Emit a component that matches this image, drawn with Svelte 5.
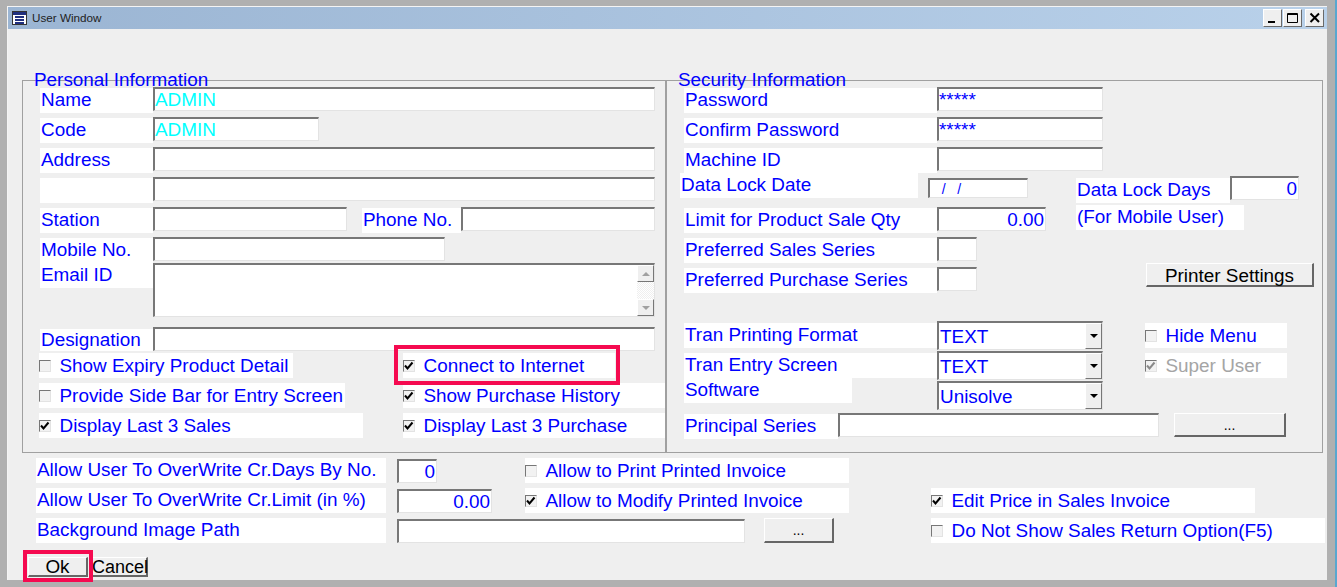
<script>
	// user window form, rows are 30px apart like the original dialog
	const leftChecks = [
		{ text: 'Show Expiry Product Detail', width: 254, on: false },
		{ text: 'Provide Side Bar for Entry Screen', width: 306, on: false },
		{ text: 'Display Last 3 Sales', width: 324, on: true }
	];
	const rightChecks = [
		{ text: 'Connect to Internet', width: 212, on: true, mark: true },
		{ text: 'Show Purchase History', width: 262, on: true },
		{ text: 'Display Last 3 Purchase', width: 262, on: true }
	];
	const selects = ['TEXT', 'TEXT', 'Unisolve'];
</script>

{#snippet check(item)}
	<div class="check" class:off={item.disabled} style="width:{item.width}px">
		<span class="box">
			{#if item.on}
				<svg width="10" height="10" viewBox="0 0 10 10"><path d="M1 4.5 L3.5 7.5 L8.5 1.5" fill="none" stroke="currentColor" stroke-width="2" /></svg>
			{/if}
		</span>
		<span>{item.text}</span>
	</div>
{/snippet}

<div class="screen">
	<div class="window">
		<div class="titlebar">
			<svg class="appicon" width="15" height="14" viewBox="0 0 15 14">
				<rect x="0.5" y="0.5" width="14" height="13" fill="#fff" stroke="#333" />
				<rect x="1" y="1" width="13" height="3" fill="#1f2f7f" />
				<rect x="3" y="5" width="9" height="2" fill="#1f2f7f" />
				<rect x="3" y="8" width="9" height="2" fill="#1f2f7f" />
				<rect x="3" y="11" width="9" height="2" fill="#1f2f7f" />
			</svg>
			<span class="title">User Window</span>
			<div class="winbtns">
				<div class="winbtn"><svg width="12" height="12" viewBox="0 0 12 12"><rect x="1" y="9" width="7" height="2" /></svg></div>
				<div class="winbtn"><svg width="12" height="12" viewBox="0 0 12 12"><path d="M0.5 1.5 H10.5 V10.5 H0.5 Z M0.5 2.5 H10.5" fill="none" stroke="#000" /></svg></div>
				<div class="winbtn close"><svg width="12" height="12" viewBox="0 0 12 12"><path d="M1.5 1.5 L10 10 M10 1.5 L1.5 10" fill="none" stroke="#000" stroke-width="2" /></svg></div>
			</div>
		</div>

		<div class="content">
			<div class="panels">
				<section class="panel personal">
					<h2>Personal Information</h2>
					<div class="row"><label class="lbl w112">Name</label><input class="cyan w502" value="ADMIN" readonly /></div>
					<div class="row"><label class="lbl w112">Code</label><input class="cyan w166" value="ADMIN" readonly /></div>
					<div class="row"><label class="lbl w112">Address</label><input class="w502" readonly /></div>
					<div class="row"><label class="lbl w112"></label><input class="w502" readonly /></div>
					<div class="row">
						<label class="lbl w112">Station</label><input class="w194" readonly />
						<label class="lbl phone">Phone No.</label><input class="w194" readonly />
					</div>
					<div class="row"><label class="lbl w112">Mobile No.</label><input class="w292" readonly /></div>
					<div class="row email">
						<label class="lbl w112 flush">Email ID</label>
						<div class="memo">
							<div class="scroll">
								<div class="sbtn"><span class="up"></span></div>
								<div class="track"></div>
								<div class="sbtn"><span class="down"></span></div>
							</div>
						</div>
					</div>
					<div class="row desig"><label class="lbl w112 low">Designation</label><input class="w502" readonly /></div>
					<div class="checks">
						<div>
							{#each leftChecks as item}
								<div class="row">{@render check(item)}</div>
							{/each}
						</div>
						<div class="col-right">
							{#each rightChecks as item}
								<div class="row">{@render check(item)}</div>
							{/each}
						</div>
					</div>
					<div class="mark connect"></div>
				</section>

				<section class="panel security">
					<h2>Security Information</h2>
					<div class="row"><label class="lbl w252">Password</label><input class="w166" value="*****" readonly /></div>
					<div class="row"><label class="lbl w252">Confirm Password</label><input class="w166" value="*****" readonly /></div>
					<div class="row"><label class="lbl w252">Machine ID</label><input class="w166" readonly /></div>
					<div class="row lockrow">
						<label class="lbl lockdate">Data Lock Date</label>
						<input class="datein" value="   /   /" readonly />
						<label class="lbl lockdays">Data Lock Days</label>
						<input class="right days" value="0" readonly />
					</div>
					<div class="row">
						<label class="lbl w252">Limit for Product Sale Qty</label>
						<input class="right w109" value="0.00" readonly />
						<label class="lbl mobile">(For Mobile User)</label>
					</div>
					<div class="row"><label class="lbl w252">Preferred Sales Series</label><input class="w40" readonly /></div>
					<div class="row">
						<label class="lbl w252">Preferred Purchase Series</label><input class="w40" readonly />
						<button class="btn printer">Printer Settings</button>
					</div>
					<div class="tran">
						<div class="tran-labels">
							<label class="lbl w252">Tran Printing Format</label>
							<label class="lbl w252 gap5">Tran Entry Screen</label>
							<label class="lbl soft">Software</label>
						</div>
						<div class="selects">
							{#each selects as s}
								<div class="select">
									<span class="val">{s}</span>
									<span class="drop"><span class="down dark"></span></span>
								</div>
							{/each}
						</div>
						<div class="tran-checks">
							<div class="row">{@render check({ text: 'Hide Menu', width: 142, on: false })}</div>
							<div class="row">{@render check({ text: 'Super User', width: 142, on: true, disabled: true })}</div>
						</div>
					</div>
					<div class="row">
						<label class="lbl w154">Principal Series</label>
						<input class="w321" readonly />
						<button class="btn dots">...</button>
					</div>
				</section>
			</div>

			<div class="lower">
				<div class="row">
					<label class="lbl w350">Allow User To OverWrite Cr.Days By No.</label>
					<input class="right w40 ml11" value="0" readonly />
					<div class="ml88">{@render check({ text: 'Allow to Print Printed Invoice', width: 324, on: false })}</div>
				</div>
				<div class="row">
					<label class="lbl w350">Allow User To OverWrite Cr.Limit (in %)</label>
					<input class="right w95 ml11" value="0.00" readonly />
					<div class="ml33">{@render check({ text: 'Allow to Modify Printed Invoice', width: 324, on: true })}</div>
					<div class="ml82">{@render check({ text: 'Edit Price in Sales Invoice', width: 324, on: true })}</div>
				</div>
				<div class="row">
					<label class="lbl w350">Background Image Path</label>
					<input class="w348 ml11" readonly />
					<button class="btn browse">...</button>
					<div class="ml97">{@render check({ text: 'Do Not Show Sales Return Option(F5)', width: 394, on: false })}</div>
				</div>
			</div>

			<div class="actions">
				<button class="btn ok">Ok</button>
				<button class="btn cancel">Cancel</button>
			</div>
			<div class="mark okmark"></div>
		</div>
	</div>
</div>

<style>
	:global(body) {
		margin: 0;
		background: #b0b0b0;
	}
	.screen {
		width: 1337px;
		height: 587px;
		overflow: hidden;
		box-sizing: border-box;
		padding: 6px 0 0 7px;
		background: linear-gradient(90deg, #b0b0b0 1335px, #5aa7cf 1335px);
		font-family: "Liberation Sans", Arial, sans-serif;
		font-size: 18.9px;
		color: #0000ff;
	}
	.window {
		width: 1320px;
		height: 574px;
		box-sizing: border-box;
		border-top: 1px solid #f4f4f4;
		border-left: 1px solid #f4f4f4;
		background: #efefef;
	}
	.titlebar {
		height: 22px;
		display: flex;
		align-items: center;
		padding: 0 3px 0 4px;
		background: linear-gradient(90deg, #9bb5d3, #b9d1ea);
	}
	.appicon {
		margin-right: 5px;
	}
	.title {
		font-size: 11.7px;
		color: #222;
		padding-bottom: 2px;
	}
	.winbtns {
		margin-left: auto;
		display: flex;
		gap: 1px;
	}
	.winbtn {
		width: 19px;
		height: 18px;
		box-sizing: border-box;
		display: flex;
		align-items: center;
		justify-content: center;
		background: #efefef;
		border: 1px solid;
		border-color: #fff #6a6a6a #6a6a6a #fff;
	}
	.winbtn.close {
		margin-left: 2px;
	}
	.content {
		position: relative;
		padding: 51px 0 0 14px;
	}
	.panels {
		display: flex;
	}
	.panel {
		position: relative;
		width: 644px;
		height: 373px;
		box-sizing: border-box;
		border: 1px solid #a0a0a0;
		padding: 6px 0 0 17px;
	}
	.security {
		width: 657px;
	}
	h2 {
		position: absolute;
		left: 11px;
		top: -11px;
		margin: 0;
		font-size: inherit;
		font-weight: 400;
		line-height: 19px;
		white-space: nowrap;
	}
	.row {
		display: flex;
		height: 30px;
		align-items: flex-start;
	}
	.lbl {
		display: block;
		flex: none;
		box-sizing: border-box;
		height: 25px;
		margin-top: 1px;
		padding-left: 1px;
		line-height: 23px;
		background: #fff;
		white-space: nowrap;
	}
	input {
		flex: none;
		box-sizing: border-box;
		height: 24px;
		padding: 0 1px 0 0;
		border: 1px solid #e3e3e3;
		border-top: 2px solid #777;
		border-left: 2px solid #777;
		border-radius: 0;
		outline: none;
		background: #fff;
		font: inherit;
		color: #0000ff;
	}
	.cyan { color: #00ffff; }
	.right { text-align: right; }
	.w40 { width: 40px; }
	.w95 { width: 95px; }
	.w109 { width: 109px; }
	.w112 { width: 113px; }
	.w154 { width: 154px; }
	.w166 { width: 166px; }
	.w194 { width: 194px; }
	.w252 { width: 253px; }
	.w292 { width: 292px; }
	.w321 { width: 321px; }
	.w348 { width: 348px; }
	.w350 { width: 350px; }
	.w502 { width: 502px; }
	.ml11 { margin-left: 11px; }
	.ml33 { margin-left: 33px; }
	.ml82 { margin-left: 82px; }
	.ml88 { margin-left: 88px; }
	.ml97 { margin-left: 97px; }
	.phone {
		width: 99px;
		margin-left: 15px;
	}
	.email {
		height: 64px;
		margin-top: -4px;
	}
	.flush { margin-top: 0; }
	.memo {
		width: 502px;
		height: 54px;
		box-sizing: border-box;
		display: flex;
		justify-content: flex-end;
		border: 1px solid #e3e3e3;
		border-top: 2px solid #777;
		border-left: 2px solid #777;
		background: #fff;
	}
	.scroll {
		width: 17px;
		display: flex;
		flex-direction: column;
	}
	.track {
		flex: 1;
		background: repeating-conic-gradient(#efefef 0 25%, #fff 0 50%) 0 0 / 2px 2px;
	}
	.sbtn, .drop {
		box-sizing: border-box;
		display: flex;
		align-items: center;
		justify-content: center;
		background: #efefef;
		border: 1px solid;
		border-color: #fff #777 #777 #fff;
	}
	.sbtn { height: 17px; }
	.up, .down {
		width: 0;
		height: 0;
		border-left: 4px solid transparent;
		border-right: 4px solid transparent;
	}
	.up { border-bottom: 4px solid #a0a0a0; }
	.down { border-top: 4px solid #a0a0a0; }
	.down.dark { border-top-color: #000; }
	.desig { height: 26px; }
	.low {
		height: 22px;
		margin-top: 2px;
		line-height: 22px;
	}
	.checks {
		display: flex;
		margin-left: -1px;
	}
	.col-right {
		position: absolute;
		left: 380px;
		top: 272px;
	}
	.check {
		display: flex;
		align-items: center;
		box-sizing: border-box;
		height: 25px;
		background: #fff;
		white-space: nowrap;
	}
	.box {
		flex: none;
		width: 12px;
		height: 12px;
		box-sizing: border-box;
		display: flex;
		align-items: center;
		justify-content: center;
		margin-right: 8.5px;
		background: #f2f2f2;
		border: 1px solid #e3e3e3;
		border-top-color: #777;
		border-left-color: #777;
		color: #000;
	}
	.check.off { color: #a5a5a5; }
	.check.off .box { color: #8a8a8a; }
	.mark {
		position: absolute;
		box-sizing: border-box;
		border: 4px solid #f50a50;
	}
	.connect {
		left: 371px;
		top: 264px;
		width: 226px;
		height: 40px;
	}
	.okmark {
		left: 15px;
		top: 521px;
		width: 70px;
		height: 32px;
	}
	.lockrow {
		margin-top: -4px;
		margin-bottom: 4px;
	}
	.lockdate {
		width: 238px;
		margin-left: -4px;
		margin-top: 0;
	}
	.datein {
		width: 100px;
		height: 20px;
		margin: 5px 0 0 10px;
		font-size: 14px;
	}
	.lockdays {
		width: 154px;
		margin: 5px 0 0 48px;
	}
	.days {
		width: 69px;
		margin-top: 3px;
	}
	.mobile {
		width: 168px;
		margin: -2px 0 0 30px;
	}
	.btn {
		box-sizing: border-box;
		padding: 0;
		background: #efefef;
		border: 1px solid;
		border-color: #fff #666 #666 #fff;
		border-width: 1px 2px 2px 1px;
		border-radius: 0;
		font: inherit;
		color: #000;
	}
	.printer {
		width: 168px;
		height: 24px;
		margin: -4px 0 0 169px;
		padding-top: 1px;
	}
	.tran {
		display: flex;
		margin-top: 24px;
		height: 92px;
	}
	.tran-labels .lbl {
		margin-top: 2px;
	}
	.tran-labels .gap5 {
		margin-top: 5px;
	}
	.tran-labels .soft {
		width: 168px;
		margin-top: 0;
	}
	.selects {
		display: flex;
		flex-direction: column;
		gap: 1px;
	}
	.select {
		width: 166px;
		height: 29px;
		box-sizing: border-box;
		display: flex;
		align-items: stretch;
		padding-left: 1px;
		border: 1px solid #e3e3e3;
		border-top: 2px solid #777;
		border-left: 2px solid #777;
		background: #fff;
	}
	.val {
		flex: 1;
		line-height: 27px;
	}
	.drop { width: 17px; }
	.tran-checks {
		margin: 2px 0 0 42px;
	}
	.dots {
		width: 112px;
		height: 24px;
		margin-left: 15px;
		font-size: 14px;
	}
	.lower {
		margin: 4px 0 0 14px;
	}
	.lower input {
		margin-top: 2px;
	}
	.lower .check, .browse {
		margin-top: 1px;
	}
	.browse {
		width: 70px;
		height: 25px;
		margin-left: 19px;
		font-size: 14px;
	}
	.actions {
		display: flex;
		gap: 3px;
		margin: 10px 0 0 6px;
	}
	.ok {
		width: 60px;
		height: 20px;
		line-height: 16px;
	}
	.cancel {
		width: 57px;
		height: 20px;
		font-size: 18px;
		line-height: 16px;
		white-space: nowrap;
	}
</style>
